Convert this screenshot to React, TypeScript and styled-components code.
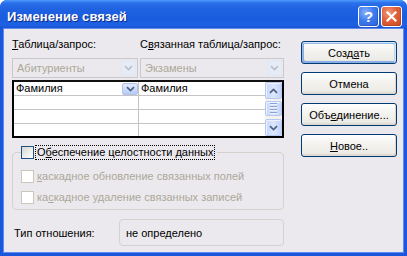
import React from 'react';
import styled, { createGlobalStyle } from 'styled-components';

const Global = createGlobalStyle`
  html, body { margin: 0; padding: 0; background: #fff; }
  body { font-family: "Liberation Sans", Arial, sans-serif; font-size: 11px; color: #000; }
  * { box-sizing: border-box; }
`;

const FONT = `"Liberation Sans", Arial, sans-serif`;
const DISABLED = '#aca899';

const Window = styled.div`
  width: 407px;
  height: 256px;
  display: flex;
  flex-direction: column;
  border-radius: 7px 7px 0 0;
  overflow: hidden;
  background: #1a57dc;
`;

const TitleBar = styled.div`
  height: 29px;
  flex: none;
  display: flex;
  align-items: center;
  padding: 4px 5px 0 7px;
  background: linear-gradient(180deg, #4c9cfb 0px, #2b70ea 3px, #1f62e2 9px, #1a5cde 18px, #1e61e2 25px, #1550d0 29px);
`;

const Title = styled.span`
  flex: 1;
  color: #fff;
  font: bold 13px ${FONT};
  text-shadow: 1px 1px #0a2a8a;
  letter-spacing: 0.1px;
`;

const TitleButtons = styled.div`
  display: flex;
  gap: 2px;
`;

const TitleButton = styled.div<{ $kind: 'help' | 'close' }>`
  width: 21px;
  height: 21px;
  border: 1px solid #fff;
  border-radius: 3px;
  display: flex;
  align-items: center;
  justify-content: center;
  color: #fff;
  font: bold 15px ${FONT};
  background: ${p =>
    p.$kind === 'close'
      ? 'radial-gradient(circle at 35% 30%, #f29a7c 0%, #e0603a 45%, #c9461f 100%)'
      : 'radial-gradient(circle at 35% 30%, #8db4fb 0%, #3f7bf0 45%, #2a5fd8 100%)'};
  box-shadow: inset -1px -1px rgba(0, 0, 0, 0.15);
`;

const Body = styled.div`
  flex: 1;
  display: flex;
  margin: 0 4px 4px;
  padding: 9px 6px 0 8px;
  gap: 17px;
  background: #ebe9ed;
  box-shadow: 0 0 0 1px #5d8cec;
`;

const LeftCol = styled.div`
  width: 272px;
  display: flex;
  flex-direction: column;
`;

const TwoCols = styled.div<{ $top?: number }>`
  display: grid;
  grid-template-columns: 126px 144px;
  column-gap: 2px;
  margin-top: ${p => p.$top ?? 0}px;
`;

const Label = styled.div`
  height: 13px;
  line-height: 13px;
  white-space: nowrap;
`;

const Combo = styled.div`
  height: 20px;
  border: 1px solid #cac8cc;
  padding: 1px;
  display: flex;
  align-items: stretch;
`;

const ComboText = styled.span`
  flex: 1;
  color: ${DISABLED};
  padding-left: 3px;
  line-height: 16px;
`;

const DropButton = styled.div<{ $disabled?: boolean; $w?: number; $h?: number }>`
  width: ${p => p.$w ?? 15}px;
  ${p => (p.$h ? `height: ${p.$h}px;` : '')}
  flex: none;
  display: flex;
  align-items: center;
  justify-content: center;
  border-radius: 2px;
  border: 1px solid ${p => (p.$disabled ? '#e2e7f0' : '#b2c4ec')};
  background: ${p =>
    p.$disabled ? '#e6ecf6' : 'linear-gradient(180deg, #e3ebfd 0%, #c9d8fa 60%, #b7cbf7 100%)'};
`;

const FieldGrid = styled.div`
  margin-top: 2px;
  height: 58px;
  display: flex;
  border: 2px solid #000;
  border-top-color: #111;
  background: #fff;
`;

const Rows = styled.div`
  flex: 1;
  display: flex;
  flex-direction: column;
`;

const Row = styled.div<{ $last?: boolean }>`
  display: grid;
  grid-template-columns: 125px 1fr;
  height: ${p => (p.$last ? 12 : 14)}px;
  border-bottom: ${p => (p.$last ? 'none' : '1px solid #c4c4c4')};
`;

const Cell = styled.div<{ $divider?: boolean }>`
  display: flex;
  align-items: center;
  padding-left: 2px;
  border-right: ${p => (p.$divider ? '1px solid #c4c4c4' : 'none')};
  line-height: 13px;
`;

const CellText = styled.span`
  flex: 1;
`;

const Scrollbar = styled.div`
  width: 17px;
  display: flex;
  flex-direction: column;
  background: #f3f2ee;
`;

const ScrollButton = styled.div<{ $h?: number; $top?: number }>`
  height: ${p => p.$h ?? 17}px;
  margin-top: ${p => p.$top ?? 0}px;
  flex: none;
  display: flex;
  flex-direction: column;
  align-items: center;
  justify-content: center;
  gap: 1px;
  border: 1px solid #b4c8f3;
  border-radius: 2px;
  background: linear-gradient(90deg, #c6d6fb 0%, #dce6fd 50%, #c3d3fa 100%);
  box-shadow: inset 1px 1px #eef3fe;
`;

const Grip = styled.div`
  width: 7px;
  height: 1px;
  background: #8aa2d6;
  box-shadow: 0 1px #eef3fe;
  margin-bottom: 1px;
`;

const Spacer = styled.div`
  flex: 1;
`;

const Group = styled.fieldset`
  margin: 7px 0 0;
  padding: 10px 8px 5px;
  min-width: 0;
  border: 1px solid #d3d2cc;
  border-radius: 4px;
  display: flex;
  flex-direction: column;
  gap: 8px;
`;

const Legend = styled.legend`
  padding: 0 2px 0 0;
  height: 15px;
  display: flex;
  align-items: center;
  gap: 1px;
`;

const CheckRow = styled.div`
  height: 13px;
  display: flex;
  align-items: center;
  gap: 1px;
`;

const CheckBox = styled.div<{ $disabled?: boolean }>`
  width: 13px;
  height: 13px;
  flex: none;
  border: 1px solid ${p => (p.$disabled ? '#cac8bb' : '#1c5180')};
  background: ${p => (p.$disabled ? '#fff' : 'linear-gradient(135deg, #d6d5cf 0%, #f4f4f2 70%, #fff 100%)')};
`;

const CheckLabel = styled.span<{ $disabled?: boolean; $focus?: boolean }>`
  color: ${p => (p.$disabled ? DISABLED : '#000')};
  line-height: 13px;
  padding: 0 1px;
  white-space: nowrap;
  border: 1px dotted ${p => (p.$focus ? '#000' : 'transparent')};
`;

const TypeRow = styled.div`
  margin-top: 9px;
  display: flex;
  align-items: center;
  justify-content: space-between;
  padding-left: 2px;
`;

const TypeBox = styled.div`
  width: 165px;
  height: 27px;
  border: 1px solid #d3d2cc;
  border-radius: 4px;
  display: flex;
  align-items: center;
  padding-left: 6px;
  padding-top: 1px;
`;

const RightCol = styled.div`
  width: 96px;
  margin-top: 3px;
  display: flex;
  flex-direction: column;
  gap: 8px;
`;

const Button = styled.div<{ $default?: boolean }>`
  height: 23px;
  display: flex;
  align-items: center;
  justify-content: center;
  border: 1px solid #003c74;
  border-radius: 3px;
  font: 11px ${FONT};
  color: #000;
  background: linear-gradient(180deg, #fff 0%, #f3f2ee 45%, #ecebe6 86%, #d6d0c5 100%);
  box-shadow: ${p =>
    p.$default
      ? 'inset -1px 1px #cee7ff, inset 1px 2px #98b8ea, inset -2px 2px #bcd4f6, inset 1px -1px #89ade4, inset 2px -2px #89ade4'
      : 'inset -1px -1px #dcd8cf'};
`;

const Chevron = ({ dir = 'down', color }: { dir?: 'up' | 'down'; color: string }) => (
  <svg width="9" height="6" viewBox="0 0 9 6">
    <path
      d={dir === 'down' ? 'M1 1.2 L4.5 4.6 L8 1.2' : 'M1 4.8 L4.5 1.4 L8 4.8'}
      fill="none"
      stroke={color}
      strokeWidth="1.7"
    />
  </svg>
);

const CloseX = () => (
  <svg width="11" height="11" viewBox="0 0 11 11">
    <path d="M1.5 1.5 L9.5 9.5 M9.5 1.5 L1.5 9.5" stroke="#fff" strokeWidth="2.2" strokeLinecap="square" />
  </svg>
);

export default function App() {
  return (
    <>
      <Global />
      <Window>
        <TitleBar>
          <Title>Изменение связей</Title>
          <TitleButtons>
            <TitleButton $kind="help">?</TitleButton>
            <TitleButton $kind="close">
              <CloseX />
            </TitleButton>
          </TitleButtons>
        </TitleBar>
        <Body>
          <LeftCol>
            <TwoCols>
              <Label>
                <u>Т</u>аблица/запрос:
              </Label>
              <Label>
                С<u>в</u>язанная таблица/запрос:
              </Label>
            </TwoCols>
            <TwoCols $top={7}>
              <Combo>
                <ComboText>Абитуриенты</ComboText>
                <DropButton $disabled>
                  <Chevron color="#b9bfcc" />
                </DropButton>
              </Combo>
              <Combo>
                <ComboText>Экзамены</ComboText>
                <DropButton $disabled>
                  <Chevron color="#b9bfcc" />
                </DropButton>
              </Combo>
            </TwoCols>
            <FieldGrid>
              <Rows>
                <Row>
                  <Cell $divider>
                    <CellText>Фамилия</CellText>
                    <DropButton $w={16} $h={12}>
                      <Chevron color="#4d6185" />
                    </DropButton>
                  </Cell>
                  <Cell>Фамилия</Cell>
                </Row>
                <Row>
                  <Cell $divider />
                  <Cell />
                </Row>
                <Row>
                  <Cell $divider />
                  <Cell />
                </Row>
                <Row $last>
                  <Cell $divider />
                  <Cell />
                </Row>
              </Rows>
              <Scrollbar>
                <ScrollButton>
                  <Chevron dir="up" color="#4d6185" />
                </ScrollButton>
                <ScrollButton $h={15} $top={2}>
                  <Grip />
                  <Grip />
                  <Grip />
                  <Grip />
                </ScrollButton>
                <Spacer />
                <ScrollButton>
                  <Chevron color="#4d6185" />
                </ScrollButton>
              </Scrollbar>
            </FieldGrid>
            <Group>
              <Legend>
                <CheckBox />
                <CheckLabel $focus>
                  О<u>б</u>еспечение целостности данных
                </CheckLabel>
              </Legend>
              <CheckRow>
                <CheckBox $disabled />
                <CheckLabel $disabled>
                  <u>к</u>аскадное обновление связанных полей
                </CheckLabel>
              </CheckRow>
              <CheckRow>
                <CheckBox $disabled />
                <CheckLabel $disabled>
                  ка<u>с</u>кадное удаление связанных записей
                </CheckLabel>
              </CheckRow>
            </Group>
            <TypeRow>
              <span>Тип отношения:</span>
              <TypeBox>не определено</TypeBox>
            </TypeRow>
          </LeftCol>
          <RightCol>
            <Button $default>
              <span>
                Созд<u>а</u>ть
              </span>
            </Button>
            <Button>Отмена</Button>
            <Button>
              <span>
                Объ<u>е</u>динение...
              </span>
            </Button>
            <Button>
              <span>
                <u>Н</u>овое..
              </span>
            </Button>
          </RightCol>
        </Body>
      </Window>
    </>
  );
}
